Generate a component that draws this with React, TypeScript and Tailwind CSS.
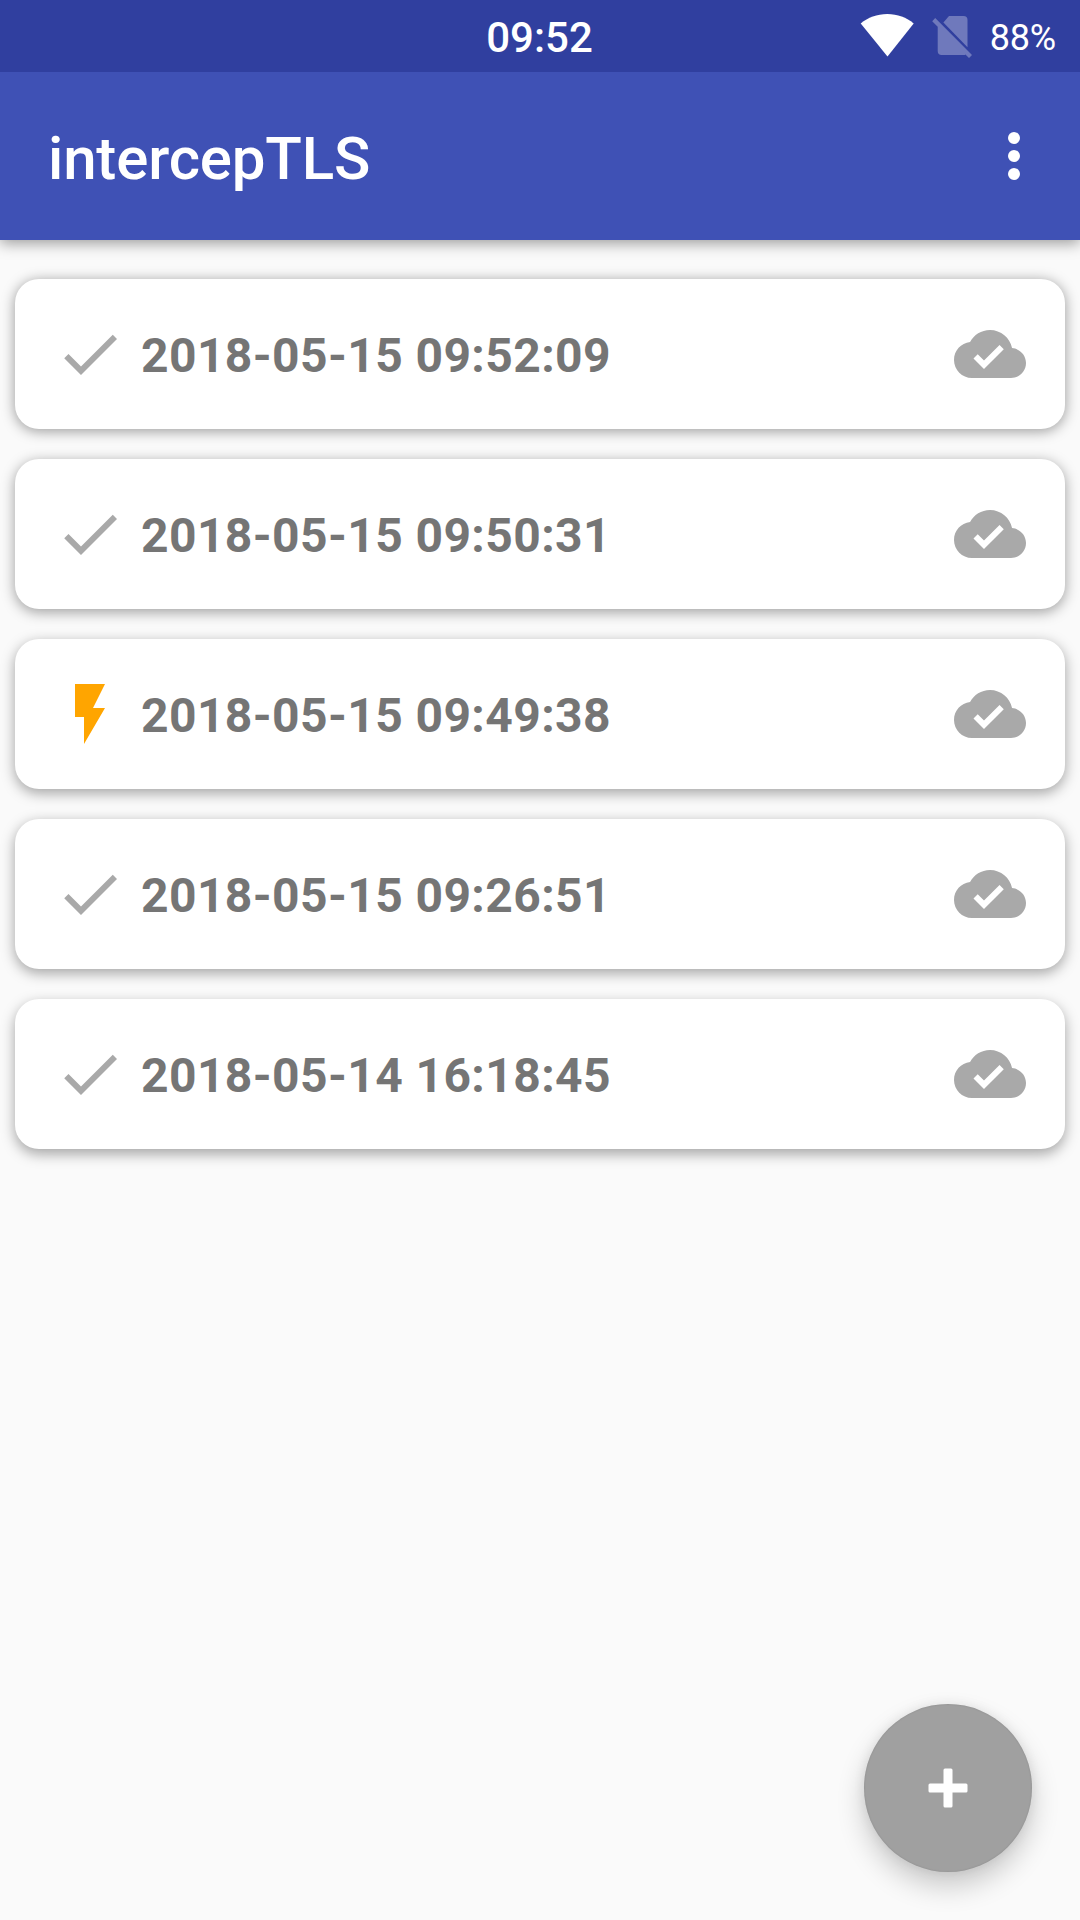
const sessions = [
  { time: "2018-05-15 09:52:09", flash: false, shadow: "shadow-[0_2px_14px_rgba(0,0,0,0.4)]" },
  { time: "2018-05-15 09:50:31", flash: false, shadow: "shadow-[0_3px_14px_rgba(0,0,0,0.38)]" },
  { time: "2018-05-15 09:49:38", flash: true, shadow: "shadow-[0_4px_14px_rgba(0,0,0,0.36)]" },
  { time: "2018-05-15 09:26:51", flash: false, shadow: "shadow-[0_4px_14px_rgba(0,0,0,0.36)]" },
  { time: "2018-05-14 16:18:45", flash: false, shadow: "shadow-[0_5px_14px_rgba(0,0,0,0.35)]" },
];

function StatusBar() {
  return (
    <div className="relative z-10 grid h-[72px] grid-cols-3 items-center bg-[#303f9f] text-white">
      <span />
      <span className="mt-1 pr-px text-center text-[42px] leading-none font-medium">09:52</span>
      <div className="flex h-full items-center justify-end pr-6">
        <svg className="mr-[18px] h-[72px] w-[54px]" viewBox="0 0 54 72" fill="currentColor">
          <path d="M0.700 23.500C8 17.500 17 14 27.300 14S46.500 17.500 53.700 23.500L27.500 56.500Z" />
        </svg>
        <svg className="mr-[18px] h-[72px] w-10 opacity-30" viewBox="0 0 40 72" fill="currentColor">
          <path d="M17 16H31.500Q35.500 16 35.500 20V47.300L11.400 22.400Z" />
          <path d="M3.200 18L40 55L37 58L33.500 54.500Q33 55 32 55H9.700Q5.700 55 5.700 51V26.700L0.200 21.200Z" />
        </svg>
        <span className="mt-1 text-[36px] leading-none tracking-[-0.2px]">88%</span>
      </div>
    </div>
  );
}

function AppBar() {
  return (
    <header className="flex h-[168px] items-center justify-between bg-[#3f51b5] pr-[30px] pl-12 text-white shadow-[0_3px_14px_rgba(0,0,0,0.4)]">
      <h1 className="mt-1.5 text-[60px] leading-none font-medium tracking-[-0.16px]">intercepTLS</h1>
      <button className="size-[72px]" aria-label="More options">
        <svg viewBox="0 0 24 24" fill="currentColor">
          <circle cx="12" cy="6" r="2" />
          <circle cx="12" cy="12" r="2" />
          <circle cx="12" cy="18" r="2" />
        </svg>
      </button>
    </header>
  );
}

function SessionCard({ time, flash, shadow }: { time: string; flash: boolean; shadow: string }) {
  return (
    <li className={`flex h-[150px] items-center rounded-[24px] bg-white px-[39px] ${shadow}`}>
      <svg
        className={flash ? "size-[72px] text-[#ffa500]" : "size-[72px] text-[#a9a9a9]"}
        viewBox="0 0 24 24"
        fill="currentColor"
      >
        <path
          d={
            flash
              ? "M7 2v11h3v9l7-12h-4l4-8z"
              : "M9 16.170L4.830 12l-1.420 1.410L9 19 21 7l-1.410-1.410z"
          }
        />
      </svg>
      <span className="mt-1 ml-[15px] flex-1 text-[48px] leading-none font-bold tracking-[0.4px] text-[#757575]">{time}</span>
      <svg className="size-[72px] text-[#a9a9a9]" viewBox="0 0 24 24" fill="currentColor">
        <path d="M19.350 10.040C18.670 6.590 15.640 4 12 4 9.110 4 6.600 5.640 5.350 8.040 2.340 8.360 0 10.910 0 14c0 3.310 2.690 6 6 6h13c2.760 0 5-2.240 5-5 0-2.640-2.050-4.780-4.650-4.960zM10 17l-3.500-3.500 1.410-1.410L10 14.170 15.180 9l1.410 1.410L10 17z" />
      </svg>
    </li>
  );
}

export default function App() {
  return (
    <div className="relative h-[1920px] w-[1080px] overflow-hidden bg-[#fafafa] font-['Roboto',sans-serif]">
      <StatusBar />
      <AppBar />
      <ul className="flex flex-col gap-[30px] px-[15px] pt-[39px]">
        {sessions.map((s) => (
          <SessionCard key={s.time} {...s} />
        ))}
      </ul>
      <button
        aria-label="Add"
        className="absolute right-12 bottom-12 flex size-[168px] items-center justify-center rounded-full bg-[#a0a0a0] text-white shadow-[0_14px_28px_rgba(0,0,0,0.2),0_0_12px_rgba(0,0,0,0.08),inset_0_0_2px_rgba(0,0,0,0.15)]"
      >
        <svg className="size-10" viewBox="0 0 40 40" fill="currentColor">
          <rect x="0.500" y="15.500" width="39" height="9" rx="1.500" />
          <rect x="15.500" y="0.500" width="9" height="39" rx="1.500" />
        </svg>
      </button>
    </div>
  );
}
